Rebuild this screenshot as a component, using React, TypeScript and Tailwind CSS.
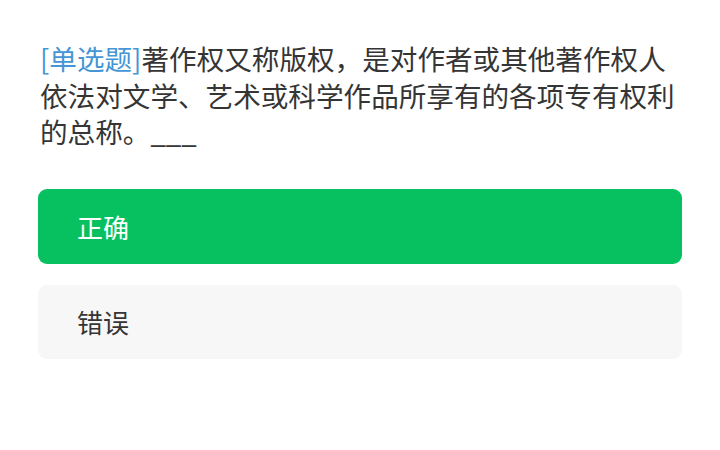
import React from 'react';

const options = [
  { label: '正确', selected: true },
  { label: '错误', selected: false },
];

const App = () => {
  return (
    <div
      className="w-[720px] h-[450px] bg-white px-[38px] pt-[40px]"
      style={{ fontFamily: '"Noto Sans CJK SC", "Noto Sans", sans-serif' }}
    >
      <p className="pl-[2px] text-[27.6px] leading-[36.5px] text-[#353535]">
        <span className="text-[#4596d6]">[单选题]</span>
        著作权又称版权，是对作者或其他著作权人依法对文学、艺术或科学作品所享有的各项专有权利的总称。___
      </p>

      <div className="mt-[39px] flex flex-col gap-[21px]">
        {options.map((opt) => (
          <div
            key={opt.label}
            className={
              opt.selected
                ? 'h-[75px] rounded-[9px] bg-[#07c160] text-white flex items-center pl-[39px] text-[26px]'
                : 'h-[74px] rounded-[9px] bg-[#f7f7f7] text-[#353535] flex items-center pl-[39px] text-[26px]'
            }
          >
            {opt.label}
          </div>
        ))}
      </div>
    </div>
  );
};

export default App;
